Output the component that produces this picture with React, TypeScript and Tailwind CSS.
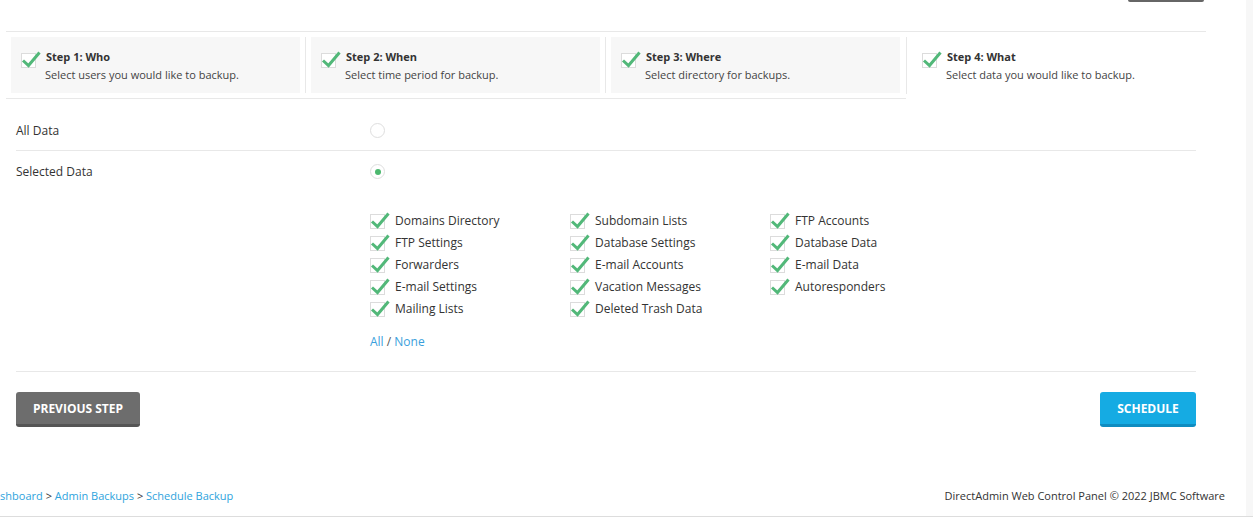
import React from "react"

const Check = ({ top = -3 }: { top?: number }) => (
  <span className="relative inline-block h-[15px] w-[15px] shrink-0 border border-[#dcdcdc] bg-white">
    <svg
      className="absolute left-[-1px]"
      style={{ top }}
      width="21"
      height="18"
      viewBox="0 0 21 18"
      fill="none"
    >
      <path d="M2 9.5 L7.5 14.5 L18.5 1.5" stroke="#52b879" strokeWidth="3" strokeLinecap="butt" strokeLinejoin="miter" />
    </svg>
  </span>
)

const Radio = ({ on }: { on?: boolean }) => (
  <span className="flex h-[15px] w-[15px] items-center justify-center rounded-full border border-[#dedede] bg-white">
    {on && <span className="h-[6px] w-[6px] rounded-full bg-[#4cb86e]" />}
  </span>
)

const steps = [
  { title: "Step 1: Who", text: "Select users you would like to backup." },
  { title: "Step 2: When", text: "Select time period for backup." },
  { title: "Step 3: Where", text: "Select directory for backups." },
  { title: "Step 4: What", text: "Select data you would like to backup." },
]

const items = [
  ["Domains Directory", "Subdomain Lists", "FTP Accounts"],
  ["FTP Settings", "Database Settings", "Database Data"],
  ["Forwarders", "E-mail Accounts", "E-mail Data"],
  ["E-mail Settings", "Vacation Messages", "Autoresponders"],
  ["Mailing Lists", "Deleted Trash Data", ""],
]

export default function App() {
  return (
    <div className="flex h-[518px] w-[1253px] flex-col overflow-hidden bg-white font-['Open_Sans',sans-serif] text-[#333]">
      <div className="flex h-[516px]">
        <div className="w-[1246px]">
          <div className="ml-[6px] w-[1200px]">
            {/* bottom of the button above */}
            <div className="flex justify-end pr-[2px]">
              <div className="h-[2px] w-[76px] rounded-b-[2px] bg-[#666]" />
            </div>

            {/* Steps */}
            <div className="mt-[29px] flex border-t border-[#e8e8e8]">
              {steps.map((s, i) => {
                const active = i === 3
                return (
                  <div
                    key={s.title}
                    className={`flex w-[300px] py-[5px] ${active ? "" : "pl-[5px] border-b border-[#e8e8e8]"}`}
                  >
                    {active && <div className="mr-[5px] w-px bg-[#e8e8e8]" />}
                    <div className={`flex h-[56px] w-[289px] pl-[10px] pt-[12px] ${active ? "" : "bg-[#f7f7f7]"}`}>
                      <div className="pt-px">
                        <Check />
                      </div>
                      <div className="pl-[10px]">
                        <div className="text-[11px] font-bold leading-[16px] text-[#333]">{s.title}</div>
                        <div className="mt-[2px] -ml-px text-[11px] leading-[16px] text-[#444]">{s.text}</div>
                      </div>
                    </div>
                    {!active && i < 2 && <div className="ml-[5px] w-px bg-[#e8e8e8]" />}
                    {!active && i === 2 && <div className="ml-[5px] w-px" />}
                  </div>
                )
              })}
            </div>

            <div className="px-[10px]">
              {/* Radios */}
              <div className="mt-[12px] flex h-[40px] items-center border-b border-[#e8e8e8]">
                <div className="w-[354px] text-[12px]">All Data</div>
                <Radio />
              </div>
              <div className="flex h-[41px] items-center">
                <div className="w-[354px] text-[12px]">Selected Data</div>
                <Radio on />
              </div>

              {/* Data checkboxes */}
              <div className="ml-[354px] mt-[18px]">
                {items.map((row, r) => (
                  <div key={r} className="flex h-[22px]">
                    {row.map((label, c) => (
                      <div key={c} className="flex w-[200px] items-center">
                        {label && (
                          <>
                            <Check />
                            <span className="ml-[10px] text-[12px] text-[#333]">{label}</span>
                          </>
                        )}
                      </div>
                    ))}
                  </div>
                ))}
                <div className="mt-[11px] text-[12px] leading-[22px]">
                  <span className="text-[#3a9fdc]">All</span>
                  <span className="text-[#555]"> / </span>
                  <span className="text-[#3a9fdc]">None</span>
                </div>
              </div>

              <div className="mt-[18px] border-b border-[#e8e8e8]" />

              {/* Buttons */}
              <div className="mt-[20px] flex justify-between">
                <button className="h-[35px] w-[124px] rounded-[3px] border-b-[3px] border-[#555] bg-[#6d6d6d] pt-[2px] text-[12px] font-bold text-white">
                  PREVIOUS STEP
                </button>
                <button className="h-[35px] w-[96px] rounded-[3px] border-b-[3px] border-[#0f8cc0] bg-[#15abe3] pt-[2px] text-[12px] font-bold text-white">
                  SCHEDULE
                </button>
              </div>
            </div>
          </div>

          {/* Footer */}
          <div className="mt-[49px] flex h-[40px] items-center justify-between pr-[21px] text-[11px]">
            <div className="-ml-[14px] whitespace-nowrap">
              <span className="text-[#2ea3dd]">Dashboard</span>
              <span className="text-[#333]"> &gt; </span>
              <span className="text-[#2ea3dd]">Admin Backups</span>
              <span className="text-[#333]"> &gt; </span>
              <span className="text-[#2ea3dd]">Schedule Backup</span>
            </div>
            <div className="text-[#333]">DirectAdmin Web Control Panel © 2022 JBMC Software</div>
          </div>
        </div>
        <div className="w-[7px] bg-[#f7f7f7]" />
      </div>
      <div className="h-px bg-[#dddddd]" />
    </div>
  )
}
